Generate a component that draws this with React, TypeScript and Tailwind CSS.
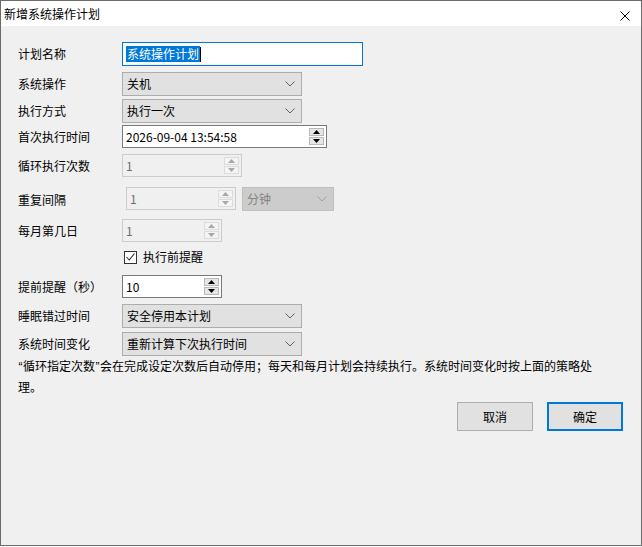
import React from "react";

// Small up/down triangles used by spin boxes
const Arrow = ({ up, color }: { up?: boolean; color: string }) => (
  <svg width="7" height="4" viewBox="0 0 7 4">
    <polygon points={up ? "0,4 7,4 3.5,0" : "0,0 7,0 3.5,4"} fill={color} />
  </svg>
);

const Chevron = ({ color = "#606060" }: { color?: string }) => (
  <svg width="10" height="6" viewBox="0 0 10 6" className="shrink-0">
    <polyline points="0.5,0.5 5,5 9.5,0.5" fill="none" stroke={color} strokeWidth="1" />
  </svg>
);

const SpinButtons = ({ disabled }: { disabled?: boolean }) => {
  const btn = disabled
    ? "bg-[#f4f4f4] border-[#dcdcdc]"
    : "bg-[#e6e6e6] border-[#b9b9b9]";
  const color = disabled ? "#a8a8a8" : "#000";
  return (
    <div className="flex flex-col gap-[1px] pr-[2px]">
      <div className={`w-[15px] h-[8px] border flex items-center justify-center ${btn}`}>
        <Arrow up color={color} />
      </div>
      <div className={`w-[15px] h-[8px] border flex items-center justify-center ${btn}`}>
        <Arrow color={color} />
      </div>
    </div>
  );
};

const SpinBox = ({
  value,
  width,
  disabled,
}: {
  value: string;
  width: string;
  disabled?: boolean;
}) => (
  <div
    className={`${width} h-[23px] border flex items-center justify-between pl-[3px] ${
      disabled
        ? "border-[#cccccc] bg-[#f0f0f0] text-[#6d6d6d]"
        : "border-[#7a7a7a] bg-white text-black"
    }`}
  >
    <span>{value}</span>
    <SpinButtons disabled={disabled} />
  </div>
);

const Select = ({
  value,
  width = "w-[180px]",
  disabled,
}: {
  value: string;
  width?: string;
  disabled?: boolean;
}) => (
  <div
    className={`${width} h-[24px] border flex items-center justify-between pl-[4px] pr-[6px] ${
      disabled
        ? "border-[#bfbfbf] bg-[#cccccc] text-[#838383]"
        : "border-[#adadad] bg-[#e1e1e1] text-black"
    }`}
  >
    <span>{value}</span>
    <Chevron color={disabled ? "#a0a0a0" : "#606060"} />
  </div>
);

const Row = ({
  label,
  className,
  children,
}: {
  label: string;
  className: string;
  children: React.ReactNode;
}) => (
  <div className={`flex items-center ${className}`}>
    <div className="w-[104px] shrink-0">{label}</div>
    {children}
  </div>
);

// narrow western quote marks inside the Chinese note
const Q = ({ children }: { children: string }) => (
  <span className="font-['Liberation_Sans',sans-serif] px-[0.5px]">{children}</span>
);

export default function App() {
  return (
    <div className="w-[642px] h-[547px] bg-white font-['Noto_Sans_CJK_SC',sans-serif] text-[12px] leading-none text-black">
      <div className="w-[642px] h-[546px] border border-[#6b6b6b] bg-[#f0f0f0] flex flex-col">
        {/* title bar */}
        <div className="h-[25px] bg-white flex items-center justify-between pl-[3px] pr-[11px] shrink-0">
          <span>新增系统操作计划</span>
          <svg width="10" height="10" viewBox="0 0 10 10" className="mt-[4px]">
            <path d="M0.5 0.5 L9.5 9.5 M9.5 0.5 L0.5 9.5" stroke="#000" strokeWidth="1" />
          </svg>
        </div>

        <div className="flex flex-col pl-[17px]">
          <Row label="计划名称" className="mt-[16px] h-[24px]">
            <div className="w-[241px] h-[24px] border border-[#0078d7] bg-white flex items-center pl-[3px]">
              <span className="bg-[#0078d7] text-white px-[1px] py-[2px]">系统操作计划</span>
              <span className="w-[1px] h-[15px] bg-black" />
            </div>
          </Row>

          <Row label="系统操作" className="mt-[6px] h-[24px]">
            <Select value="关机" />
          </Row>

          <Row label="执行方式" className="mt-[3px] h-[24px]">
            <Select value="执行一次" />
          </Row>

          <Row label="首次执行时间" className="mt-[2px] h-[23px]">
            <div className="w-[205px] h-[23px] border border-[#7a7a7a] bg-white flex items-center justify-between pl-[3px]">
              <span>2026-09-04 13:54:58</span>
              <SpinButtons />
            </div>
          </Row>

          <Row label="循环执行次数" className="mt-[6px] h-[23px]">
            <SpinBox value="1" width="w-[120px]" disabled />
          </Row>

          <Row label="重复间隔" className="mt-[10px] h-[25px]">
            <div className="flex items-start gap-[6px] h-[25px] pl-[4px]">
              <SpinBox value="1" width="w-[110px]" disabled />
              <Select value="分钟" width="w-[92px]" disabled />
            </div>
          </Row>

          <Row label="每月第几日" className="mt-[7px] h-[23px]">
            <SpinBox value="1" width="w-[100px]" disabled />
          </Row>

          <div className="mt-[6px] h-[18px] flex items-center pl-[106px] gap-[6px]">
            <div className="w-[13px] h-[13px] border border-[#333333] bg-white flex items-center justify-center">
              <svg width="9" height="8" viewBox="0 0 9 8">
                <polyline points="0.5,4 3.2,7 8.5,0.5" fill="none" stroke="#333" strokeWidth="1.1" />
              </svg>
            </div>
            <span>执行前提醒</span>
          </div>

          <Row label="提前提醒（秒）" className="mt-[9px] h-[23px]">
            <SpinBox value="10" width="w-[100px]" />
          </Row>

          <Row label="睡眠错过时间" className="mt-[6px] h-[24px]">
            <Select value="安全停用本计划" />
          </Row>

          <Row label="系统时间变化" className="mt-[4px] h-[24px]">
            <Select value="重新计算下次执行时间" />
          </Row>

          <div className="leading-[19px] whitespace-nowrap">
            <div>
              <Q>“</Q>循环指定次数<Q>”</Q>会在完成设定次数后自动停用；每天和每月计划会持续执行。系统时间变化时按上面的策略处
            </div>
            <div>理。</div>
          </div>

          <div className="mt-[6px] flex justify-end gap-[14px] pr-[18px]">
            <button className="w-[76px] h-[29px] border border-[#adadad] bg-[#e1e1e1]">取消</button>
            <button className="w-[76px] h-[29px] border-2 border-[#0078d7] bg-[#e1e1e1]">确定</button>
          </div>
        </div>
      </div>
    </div>
  );
}
